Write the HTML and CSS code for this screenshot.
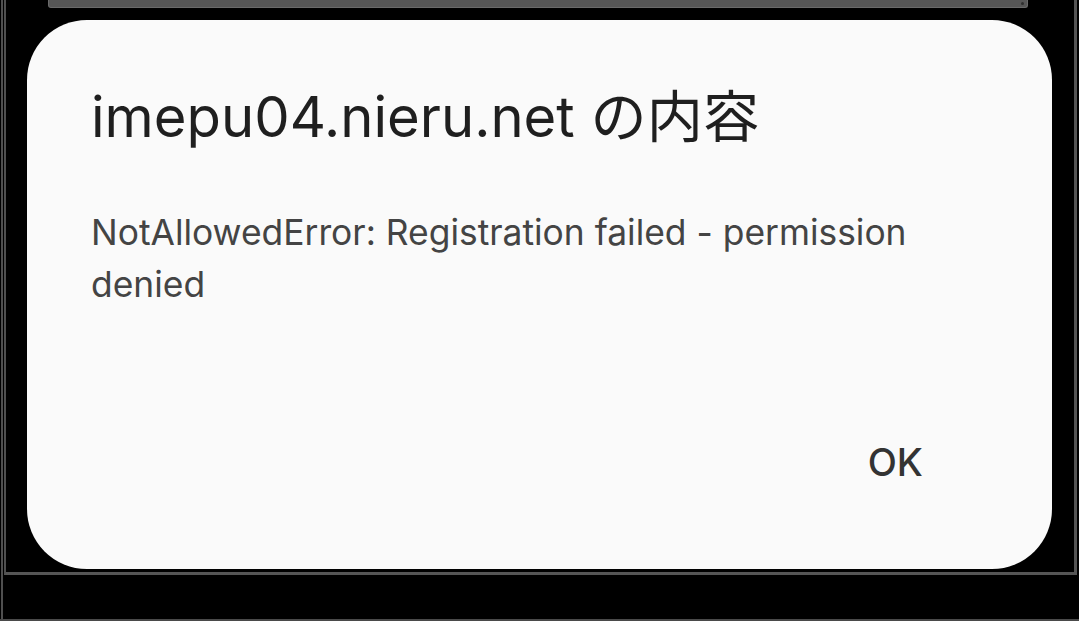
FILE: index.html
```html
<!DOCTYPE html>
<html lang="ja">
<head>
<meta charset="utf-8">
<title>imepu04.nieru.net の内容</title>
<link rel="stylesheet" href="styles.css">
</head>
<body>
<div class="screen">
  <div class="shell">
    <div class="frame">
      <div class="topbar"><span class="topbar-dot"></span></div>
      <div class="dialog">
        <h1 class="dialog-title">imepu04.nieru.net の内容</h1>
        <p class="dialog-message">NotAllowedError: Registration failed - permission denied</p>
        <div class="dialog-actions">
          <button class="dialog-button" type="button">OK</button>
        </div>
      </div>
    </div>
  </div>
</div>
</body>
</html>
```
FILE: styles.css
```css
html, body {
  margin: 0;
  padding: 0;
  background: #000;
}
.screen {
  width: 1079px;
  height: 621px;
  box-sizing: border-box;
  padding-left: 1px;
  border-bottom: 2px solid #4a4a4a;
  background: #000;
  overflow: hidden;
}
.shell {
  height: 619px;
  box-sizing: border-box;
  border-left: 2px solid #4f4f4f;
  padding-left: 1px;
}
.frame {
  width: 1073px;
  height: 575px;
  box-sizing: border-box;
  border-left: 2px solid #4f4f4f;
  border-right: 3px solid #555;
  border-bottom: 3px solid #555;
  display: flex;
  flex-direction: column;
}
.topbar {
  margin-left: 42px;
  width: 980px;
  height: 8px;
  box-sizing: border-box;
  background: #565656;
  border: 1px solid #6a6a6a;
  border-top: none;
  border-radius: 0 0 3px 3px;
  position: relative;
}
.topbar-dot {
  position: absolute;
  right: 3px;
  top: 2px;
  width: 3px;
  height: 3px;
  border-radius: 50%;
  background: #2e2e2e;
}
.dialog {
  margin-top: 12px;
  margin-left: 21px;
  width: 1025px;
  height: 549px;
  box-sizing: border-box;
  background: #fafafa;
  border-radius: 60px;
  padding: 65px 64px 0 64px;
  display: flex;
  flex-direction: column;
  font-family: Inter, "Noto Sans CJK JP", sans-serif;
}
.dialog-title {
  margin: 0;
  font-size: 56.2px;
  font-weight: 400;
  line-height: 64px;
  color: #1f1f1f;
}
.dialog-message {
  margin: 58px 0 0 0;
  width: 870px;
  font-size: 35.4px;
  line-height: 52px;
  color: #444;
}
.dialog-actions {
  margin-top: auto;
  margin-bottom: 87px;
  display: flex;
  justify-content: flex-end;
}
.dialog-button {
  border: none;
  background: transparent;
  padding: 0;
  margin-right: 65px;
  font-family: Inter, sans-serif;
  font-size: 38px;
  font-weight: 500;
  color: #333;
  line-height: 40px;
}
```
